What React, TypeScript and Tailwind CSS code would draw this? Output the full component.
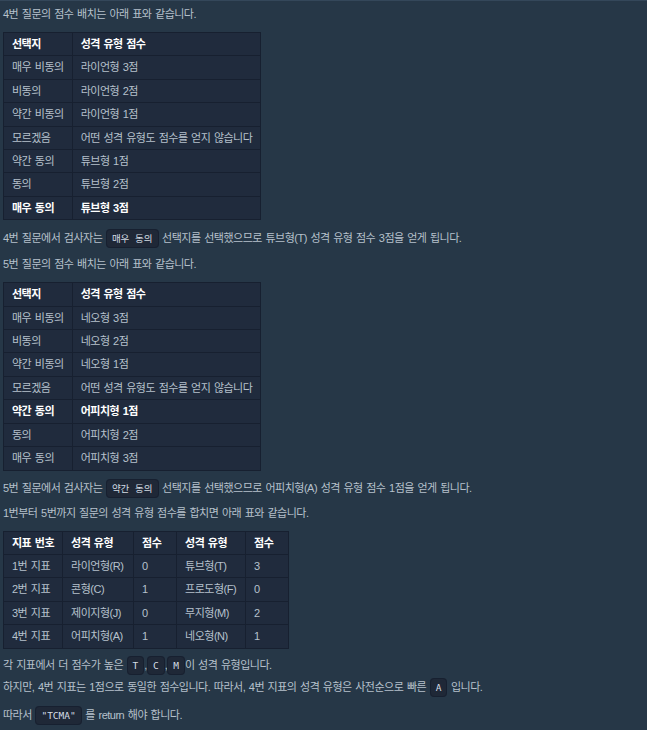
import React from 'react';

type Row = { cells: string[]; bold?: boolean };

const table4: Row[] = [
  { cells: ['매우 비동의', '라이언형 3점'] },
  { cells: ['비동의', '라이언형 2점'] },
  { cells: ['약간 비동의', '라이언형 1점'] },
  { cells: ['모르겠음', '어떤 성격 유형도 점수를 얻지 않습니다'] },
  { cells: ['약간 동의', '튜브형 1점'] },
  { cells: ['동의', '튜브형 2점'] },
  { cells: ['매우 동의', '튜브형 3점'], bold: true },
];

const table5: Row[] = [
  { cells: ['매우 비동의', '네오형 3점'] },
  { cells: ['비동의', '네오형 2점'] },
  { cells: ['약간 비동의', '네오형 1점'] },
  { cells: ['모르겠음', '어떤 성격 유형도 점수를 얻지 않습니다'] },
  { cells: ['약간 동의', '어피치형 1점'], bold: true },
  { cells: ['동의', '어피치형 2점'] },
  { cells: ['매우 동의', '어피치형 3점'] },
];

const summary: Row[] = [
  { cells: ['1번 지표', '라이언형(R)', '0', '튜브형(T)', '3'] },
  { cells: ['2번 지표', '콘형(C)', '1', '프로도형(F)', '0'] },
  { cells: ['3번 지표', '제이지형(J)', '0', '무지형(M)', '2'] },
  { cells: ['4번 지표', '어피치형(A)', '1', '네오형(N)', '1'] },
];

// column widths for the summary table (border to border)
const summaryWidths = ['w-[58px]', 'w-[71px]', 'w-[43px]', 'w-[69px]', 'w-[43px]'];

function Table({ head, rows, widths }: { head: string[]; rows: Row[]; widths?: string[] }) {
  return (
    <table className="border-collapse bg-[#202b3d] leading-[14.4px]">
      <thead>
        <tr>
          {head.map((h, i) => (
            <th
              key={i}
              className={`whitespace-nowrap border border-[#172030] px-[8px] py-[4px] text-left font-bold text-white ${widths ? widths[i] : ''}`}
            >
              {h}
            </th>
          ))}
        </tr>
      </thead>
      <tbody>
        {rows.map((row, i) => (
          <tr key={i}>
            {row.cells.map((c, j) => (
              <td
                key={j}
                className={`whitespace-nowrap border border-[#172030] px-[8px] py-[4px] ${row.bold ? 'font-bold text-white' : 'text-[#b6c1cc]'}`}
              >
                {c}
              </td>
            ))}
          </tr>
        ))}
      </tbody>
    </table>
  );
}

function Code({ children }: { children: React.ReactNode }) {
  return (
    <code className="rounded-[4px] border border-[#172030] bg-[#1f2837] px-[5px] py-[3px] font-['DejaVu_Sans_Mono','Noto_Sans_CJK_KR',monospace] text-[9.5px] leading-none tracking-normal [word-spacing:0px] text-[#d5dde5]">
      {children}
    </code>
  );
}

export default function App() {
  return (
    <div className="min-h-[730px] w-[647px] border-t border-[#34475a] bg-[#263747] px-[3px] pt-[2px] font-['Liberation_Sans','Noto_Sans_CJK_KR',sans-serif] text-[11px] leading-[22px] tracking-[-0.5px] [word-spacing:1px] text-[#b6c1cc]">
      <p>4번 질문의 점수 배치는 아래 표와 같습니다.</p>
      <div className="mt-[7px]">
        <Table head={['선택지', '성격 유형 점수']} rows={table4} />
      </div>
      <p className="mt-[7px]">
        4번 질문에서 검사자는 <Code>매우 동의</Code> 선택지를 선택했으므로 튜브형(T) 성격 유형 점수 3점을 얻게 됩니다.
      </p>
      <p className="mt-[4px]">5번 질문의 점수 배치는 아래 표와 같습니다.</p>
      <div className="mt-[7px]">
        <Table head={['선택지', '성격 유형 점수']} rows={table5} />
      </div>
      <p className="mt-[6px]">
        5번 질문에서 검사자는 <Code>약간 동의</Code> 선택지를 선택했으므로 어피치형(A) 성격 유형 점수 1점을 얻게 됩니다.
      </p>
      <p className="mt-[3px]">1번부터 5번까지 질문의 성격 유형 점수를 합치면 아래 표와 같습니다.</p>
      <div className="mt-[7px]">
        <Table head={['지표 번호', '성격 유형', '점수', '성격 유형', '점수']} rows={summary} widths={summaryWidths} />
      </div>
      <p className="mt-[5px]">
        각 지표에서 더 점수가 높은 <Code>T</Code>,<Code>C</Code>,<Code>M</Code>이 성격 유형입니다.
        <br />
        하지만, 4번 지표는 1점으로 동일한 점수입니다. 따라서, 4번 지표의 성격 유형은 사전순으로 빠른 <Code>A</Code> 입니다.
      </p>
      <p className="mt-[6px]">
        따라서 <Code>"TCMA"</Code> 를 return 해야 합니다.
      </p>
    </div>
  );
}
